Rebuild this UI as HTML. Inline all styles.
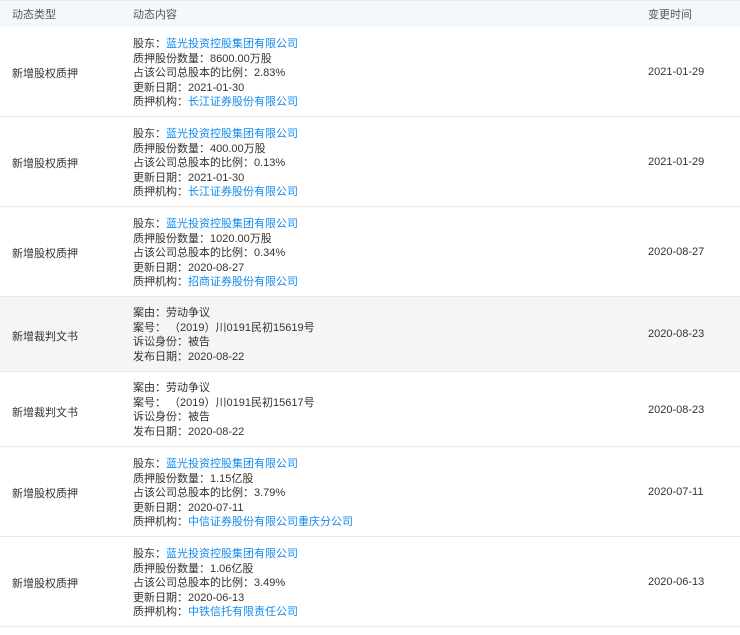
<!DOCTYPE html>
<html><head><meta charset="utf-8"><style>
body{margin:0;width:740px;height:635px;background:#fff;font-family:"Liberation Sans","Noto Sans CJK SC",sans-serif;font-size:11px;color:#333;overflow:hidden}
.hd{position:absolute;left:0;top:0;width:740px;height:27px;background:#f2f8fc;border-top:1px solid #e8eef2;box-sizing:border-box;color:#555}
.r{position:absolute;left:0;width:740px;border-bottom:1px solid #eaeaea;box-sizing:border-box}
.c1{position:absolute;left:12px}
.c2{position:absolute;left:133px;line-height:14.5px}
.c3{position:absolute;left:648px}
a{color:#128bed;text-decoration:none}
</style></head><body>
<div class="hd"><span class="c1" style="top:5px">动态类型</span><span style="position:absolute;left:133px;top:5px">动态内容</span><span class="c3" style="top:5px">变更时间</span></div>

<div class="r" style="top:27px;height:90px"><span class="c1" style="top:38px">新增股权质押</span><div class="c2" style="top:10px">股东：<a>蓝光投资控股集团有限公司</a><br>质押股份数量：8600.00万股<br>占该公司总股本的比例：2.83%<br>更新日期：2021-01-30<br>质押机构：<a>长江证券股份有限公司</a></div><span class="c3" style="top:39px">2021-01-29</span></div>

<div class="r" style="top:117px;height:90px"><span class="c1" style="top:38px">新增股权质押</span><div class="c2" style="top:10px">股东：<a>蓝光投资控股集团有限公司</a><br>质押股份数量：400.00万股<br>占该公司总股本的比例：0.13%<br>更新日期：2021-01-30<br>质押机构：<a>长江证券股份有限公司</a></div><span class="c3" style="top:39px">2021-01-29</span></div>

<div class="r" style="top:207px;height:90px"><span class="c1" style="top:38px">新增股权质押</span><div class="c2" style="top:10px">股东：<a>蓝光投资控股集团有限公司</a><br>质押股份数量：1020.00万股<br>占该公司总股本的比例：0.34%<br>更新日期：2020-08-27<br>质押机构：<a>招商证券股份有限公司</a></div><span class="c3" style="top:39px">2020-08-27</span></div>

<div class="r" style="top:297px;height:75px;background:#f5f5f5"><span class="c1" style="top:31px">新增裁判文书</span><div class="c2" style="top:9px">案由：劳动争议<br>案号： （2019）川0191民初15619号<br>诉讼身份：被告<br>发布日期：2020-08-22</div><span class="c3" style="top:31px">2020-08-23</span></div>

<div class="r" style="top:372px;height:75px"><span class="c1" style="top:32px">新增裁判文书</span><div class="c2" style="top:9px">案由：劳动争议<br>案号： （2019）川0191民初15617号<br>诉讼身份：被告<br>发布日期：2020-08-22</div><span class="c3" style="top:32px">2020-08-23</span></div>

<div class="r" style="top:447px;height:90px"><span class="c1" style="top:38px">新增股权质押</span><div class="c2" style="top:10px">股东：<a>蓝光投资控股集团有限公司</a><br>质押股份数量：1.15亿股<br>占该公司总股本的比例：3.79%<br>更新日期：2020-07-11<br>质押机构：<a>中信证券股份有限公司重庆分公司</a></div><span class="c3" style="top:39px">2020-07-11</span></div>

<div class="r" style="top:537px;height:90px"><span class="c1" style="top:38px">新增股权质押</span><div class="c2" style="top:10px">股东：<a>蓝光投资控股集团有限公司</a><br>质押股份数量：1.06亿股<br>占该公司总股本的比例：3.49%<br>更新日期：2020-06-13<br>质押机构：<a>中铁信托有限责任公司</a></div><span class="c3" style="top:39px">2020-06-13</span></div>
</body></html>
